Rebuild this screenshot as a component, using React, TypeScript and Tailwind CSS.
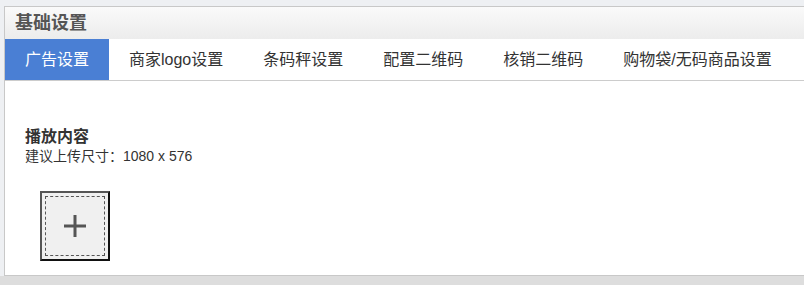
const tabs = ["广告设置", "商家logo设置", "条码秤设置", "配置二维码", "核销二维码", "购物袋/无码商品设置"];

const App = () => {
  return (
    <div
      className="w-[804px] h-[285px] overflow-hidden bg-[#dddddd]"
      style={{ fontFamily: '"Liberation Sans", "Noto Sans CJK SC", sans-serif' }}
    >
      <div className="bg-[#eef0f3] pt-[6px] pl-[4px]">
        <div className="w-[820px] h-[270px] bg-white border border-[#c8c8c8] flex flex-col">
          <div className="h-[32px] bg-gradient-to-b from-[#fafafa] to-[#ececec] flex items-center px-[10px]">
            <span className="text-[18px] font-bold text-[#555]">基础设置</span>
          </div>
          <div className="flex h-[42px] border-b border-[#cccccc]">
            {tabs.map((t, i) => (
              <div
                key={t}
                className={
                  i === 0
                    ? "px-[20px] flex items-center text-[16px] bg-[#4a7fd4] text-white"
                    : "px-[20px] flex items-center text-[16px] text-[#333]"
                }
              >
                {t}
              </div>
            ))}
          </div>
          <div className="pl-[20px] pt-[45px]">
            <p className="text-[16px] font-bold text-[#333] leading-[21px]">播放内容</p>
            <p className="text-[14px] text-[#333] leading-[18px]">建议上传尺寸：1080 x 576</p>
            <div className="mt-[26px] ml-[15px] w-[70px] h-[70px] border-2 border-t-[#555] border-l-[#555] border-r-[#111] border-b-[#111] bg-[#f0f0f0] p-[3px]">
              <div className="w-full h-full border border-dashed border-[#555] flex items-center justify-center">
                <svg width="24" height="24" viewBox="0 0 24 24">
                  <path d="M12 1v22M1 12h22" stroke="#555" strokeWidth="3" />
                </svg>
              </div>
            </div>
          </div>
        </div>
      </div>
    </div>
  );
};

export default App;
